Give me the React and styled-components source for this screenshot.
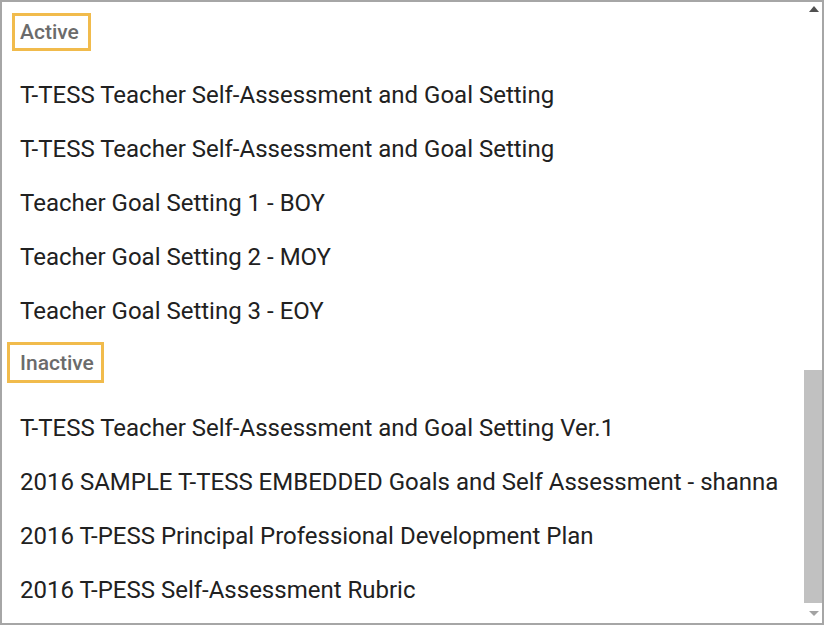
import styled, { createGlobalStyle } from "styled-components";

const GlobalStyle = createGlobalStyle`
  html, body {
    margin: 0;
    padding: 0;
    background: #ffffff;
  }
  body {
    font-family: Roboto, "Liberation Sans", sans-serif;
  }
`;

const groups = [
  {
    name: "Active",
    box: { top: 8, left: -8, height: 38, padL: 5, padR: 9 },
    items: [
      "T-TESS Teacher Self-Assessment and Goal Setting",
      "T-TESS Teacher Self-Assessment and Goal Setting",
      "Teacher Goal Setting 1 - BOY",
      "Teacher Goal Setting 2 - MOY",
      "Teacher Goal Setting 3 - EOY",
    ],
  },
  {
    name: "Inactive",
    box: { top: 4, left: -13, height: 41, padL: 10, padR: 7 },
    items: [
      "T-TESS Teacher Self-Assessment and Goal Setting Ver.1",
      "2016 SAMPLE T-TESS EMBEDDED Goals and Self Assessment - shanna",
      "2016 T-PESS Principal Professional Development Plan",
      "2016 T-PESS Self-Assessment Rubric",
    ],
  },
];

const App = () => {
  return (
    <>
      <GlobalStyle />
      <Frame>
        <List>
          {groups.map((group) => (
            <div key={group.name}>
              <GroupHeader>
                <Label
                  $top={group.box.top}
                  $left={group.box.left}
                  $height={group.box.height}
                  $padL={group.box.padL}
                  $padR={group.box.padR}
                >
                  {group.name}
                </Label>
              </GroupHeader>
              {group.items.map((item, i) => (
                <Item key={i}>{item}</Item>
              ))}
            </div>
          ))}
        </List>
        <Scrollbar>
          <ArrowButton>
            <Arrow $up />
          </ArrowButton>
          <Track>
            <Thumb />
          </Track>
          <ArrowButton $bottom>
            <Arrow />
          </ArrowButton>
        </Scrollbar>
      </Frame>
    </>
  );
};

export default App;

const Frame = styled.div`
  width: 824px;
  height: 625px;
  box-sizing: border-box;
  border: 2px solid #a6a6a6;
  background: #ffffff;
  display: flex;
  overflow: hidden;
`;

const List = styled.div`
  flex: 1;
  padding-top: 3px;
  overflow: hidden;
`;

const GroupHeader = styled.div`
  height: 63px;
  padding-left: 18px;
  display: flex;
  align-items: flex-start;
`;

const Label = styled.div`
  margin-top: ${({ $top }) => $top}px;
  margin-left: ${({ $left }) => $left}px;
  height: ${({ $height }) => $height}px;
  padding: 0 ${({ $padR }) => $padR}px 0 ${({ $padL }) => $padL}px;
  box-sizing: border-box;
  border: 3px solid #f1bb4c;
  display: flex;
  align-items: center;
  font-size: 21px;
  font-weight: 500;
  color: #6b6b6b;
`;

const Item = styled.div`
  height: 54px;
  padding-left: 18px;
  display: flex;
  align-items: center;
  font-size: 24px;
  color: #212121;
  white-space: nowrap;
`;

const Scrollbar = styled.div`
  width: 18px;
  display: flex;
  flex-direction: column;
`;

const ArrowButton = styled.div`
  height: ${({ $bottom }) => ($bottom ? 20 : 18)}px;
  display: flex;
  justify-content: center;
  align-items: ${({ $bottom }) => ($bottom ? "center" : "flex-start")};
  padding-top: ${({ $bottom }) => ($bottom ? 0 : 4)}px;
  box-sizing: border-box;
  padding-left: 2px;
`;

const Arrow = styled.div`
  width: 0;
  height: 0;
  border-left: 5px solid transparent;
  border-right: 5px solid transparent;
  ${({ $up }) =>
    $up
      ? "border-bottom: 6px solid #505050;"
      : "border-top: 5px solid #a3a3a3;"}
`;

const Track = styled.div`
  flex: 1;
  display: flex;
  flex-direction: column;
  justify-content: flex-end;
`;

const Thumb = styled.div`
  height: 233px;
  background: #c1c1c1;
`;
